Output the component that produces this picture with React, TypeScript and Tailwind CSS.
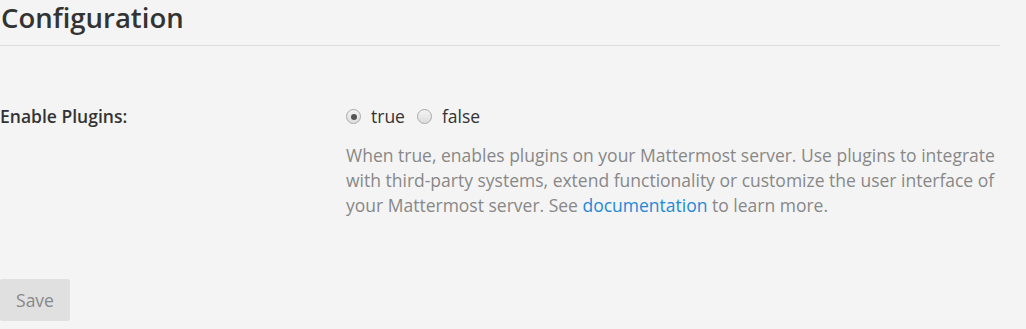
export default function App() {
  return (
    <div
      className="w-[1026px] h-[329px] overflow-hidden bg-[#f4f4f4] text-[#333]"
      style={{ fontFamily: '"Open Sans", sans-serif' }}
    >
      <div className="w-[1000px]">
        {/* Header */}
        <div className="h-[46px] border-b border-[#ddd] flex items-end">
          <h3 className="text-[27.5px] leading-[36px] font-semibold text-[#333] pl-[1px] pb-[9px]">
            Configuration
          </h3>
        </div>

        {/* Setting row */}
        <div className="flex mt-[58px]">
          <label className="w-[346px] shrink-0 text-[17.5px] leading-[25px] font-semibold text-[#333]">
            Enable Plugins:
          </label>
          <div className="flex-1">
            <div className="flex items-center h-[25px] text-[17.5px] text-[#333]">
              <span className="w-[15px] h-[15px] rounded-full border border-[#aaa] bg-gradient-to-b from-[#f4f4f4] to-[#ddd] flex items-center justify-center">
                <span className="w-[6px] h-[6px] rounded-full bg-[#555]" />
              </span>
              <span className="ml-[10px]">true</span>
              <span className="ml-[12px] w-[15px] h-[15px] rounded-full border border-[#aaa] bg-gradient-to-b from-[#f4f4f4] to-[#ddd]" />
              <span className="ml-[10px]">false</span>
            </div>
            <p className="mt-[14px] text-[17.5px] leading-[25px] text-[#888] pr-[2px]">
              When true, enables plugins on your Mattermost server. Use plugins to integrate
              with third-party systems, extend functionality or customize the user interface of
              your Mattermost server. See <a className="text-[#2389d7]">documentation</a> to learn
              more.
            </p>
          </div>
        </div>

        {/* Save */}
        <button className="mt-[61px] w-[70px] h-[42px] rounded-[2px] bg-[#e0e0e0] text-[17.5px] text-[#888]">
          Save
        </button>
      </div>
    </div>
  );
}
